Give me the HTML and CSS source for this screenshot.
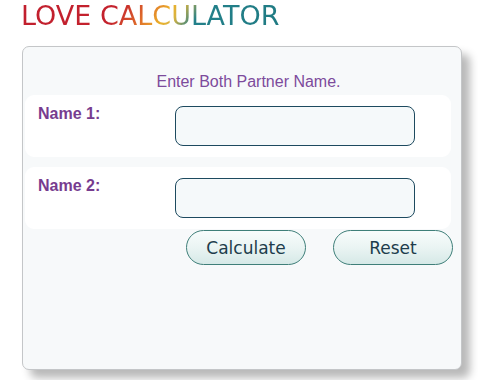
FILE: index.html
```html
<!DOCTYPE html>
<html lang="en">
<head>
<meta charset="utf-8">
<title>Love Calculator</title>
<link rel="stylesheet" href="styles.css">
</head>
<body>
<h1 class="title">LOVE CALCULATOR</h1>
<div class="card">
  <p class="instruction">Enter Both Partner Name.</p>
  <div class="row">
    <label class="label" for="n1">Name 1:</label>
    <input class="field" id="n1" type="text">
  </div>
  <div class="row row-second">
    <label class="label" for="n2">Name 2:</label>
    <input class="field" id="n2" type="text">
  </div>
  <div class="actions">
    <button class="btn" type="button">Calculate</button>
    <button class="btn" type="button">Reset</button>
  </div>
</div>
</body>
</html>
```
FILE: styles.css
```css
html, body {
  margin: 0;
  padding: 0;
  background: #ffffff;
}

body {
  font-family: "Liberation Sans", Arial, sans-serif;
  width: 478px;
  height: 380px;
  overflow: hidden;
}

.title {
  display: inline-block;
  margin: 1px 0 0 21px;
  font-family: "DejaVu Sans", Verdana, sans-serif;
  font-weight: normal;
  font-size: 27px;
  line-height: 30px;
  background: linear-gradient(125deg, #c11f2e 0%, #c4222d 37%, #de6a2a 47%, #ebb02a 55%, #d9b340 59%, #23808a 67%, #1f7a82 100%);
  -webkit-background-clip: text;
  background-clip: text;
  color: transparent;
}

.card {
  box-sizing: border-box;
  margin: 15px 0 0 22px;
  width: 440px;
  height: 324px;
  background: #f7f9fa;
  border: 1px solid #c4c6c8;
  border-radius: 7px;
  box-shadow: 8px 8px 9px rgba(0, 0, 0, 0.28);
  padding-top: 26px;
}

.instruction {
  margin: 0 0 4px 0;
  padding-left: 13px;
  text-align: center;
  font-size: 16px;
  line-height: 18px;
  color: #7d4b9c;
}

.row {
  display: flex;
  align-items: flex-start;
  box-sizing: border-box;
  margin-left: 2px;
  width: 426px;
  height: 62px;
  padding: 10px 0 0 13px;
  background: #ffffff;
  border-radius: 9px;
}

.row-second {
  margin-top: 10px;
}

.label {
  width: 137px;
  font-size: 16px;
  line-height: 18px;
  font-weight: bold;
  color: #773c8f;
}

.field {
  box-sizing: border-box;
  margin-top: 1px;
  width: 240px;
  height: 40px;
  border: 1px solid #1d4a5f;
  border-radius: 8px;
  background: #f5f9fa;
  outline: none;
}

.actions {
  display: flex;
  gap: 27px;
  margin: 1px 0 0 163px;
}

.btn {
  box-sizing: border-box;
  width: 120px;
  height: 35px;
  padding: 0;
  border: 1px solid #3f7f79;
  border-radius: 18px;
  background: linear-gradient(to bottom, #f8fcfc 0%, #eaf4f3 50%, #d6e9e7 100%);
  font-family: "DejaVu Sans", Verdana, sans-serif;
  font-size: 17px;
  color: #203c4c;
}
```
